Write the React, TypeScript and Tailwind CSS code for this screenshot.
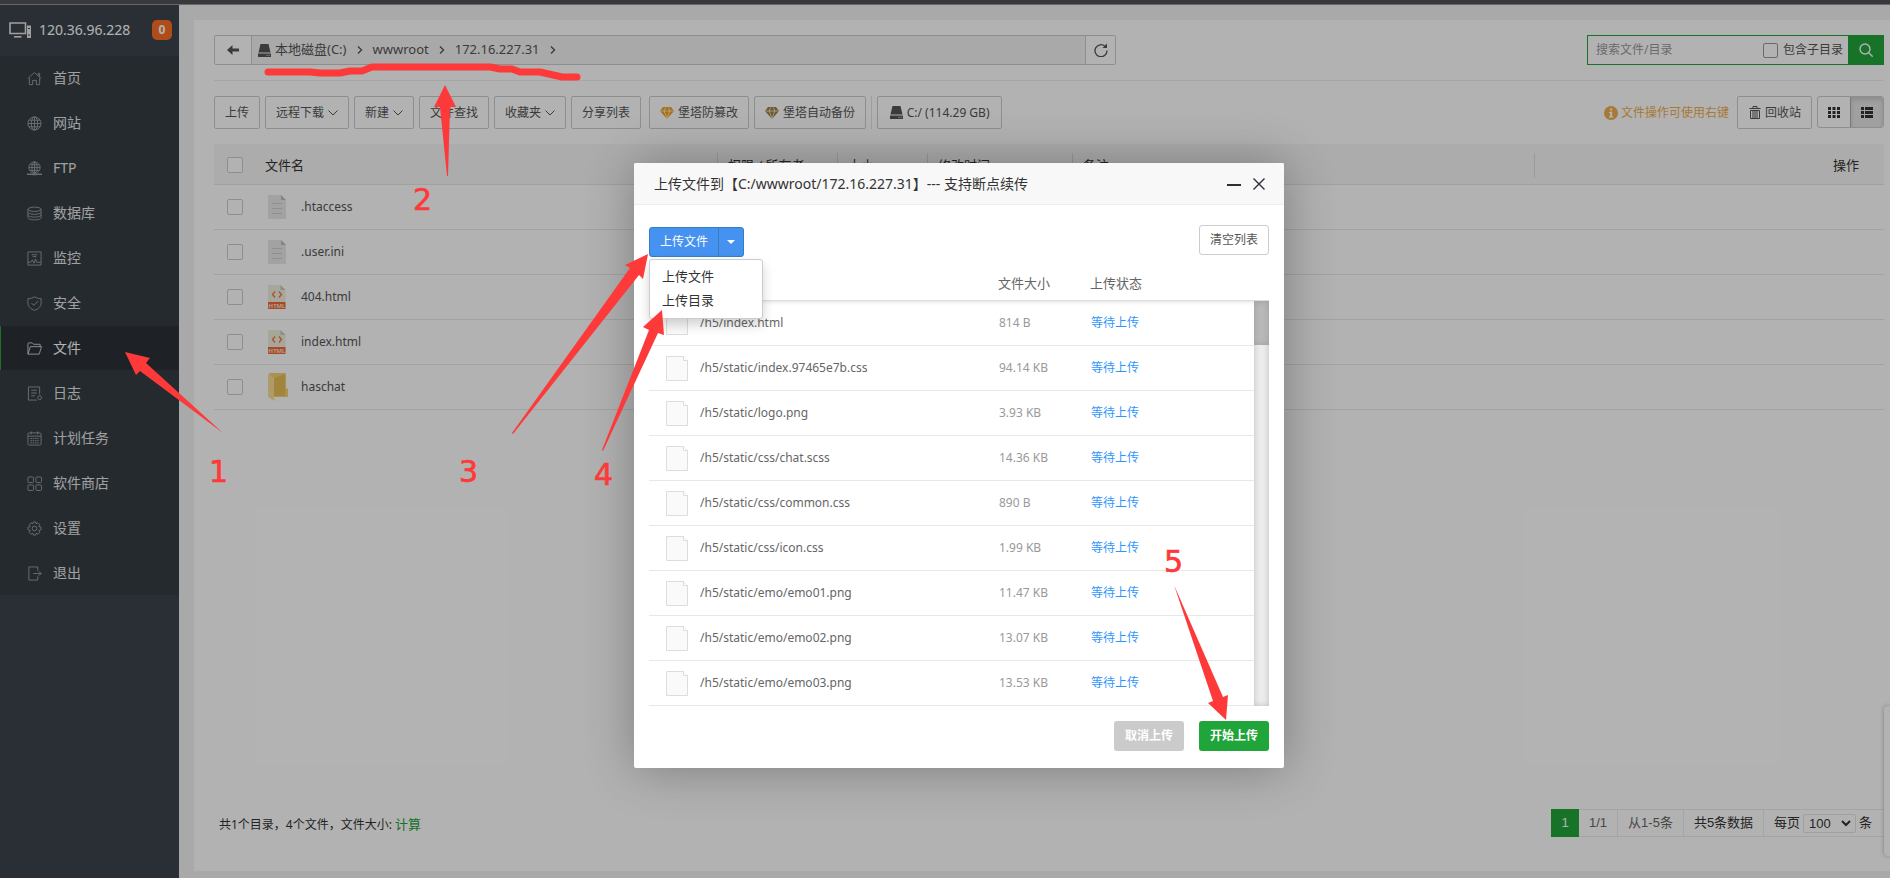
import type { ReactNode } from 'react';

type IconProps = { className?: string };

function LineIcon({ children }: { children: ReactNode }) {
  return (
    <svg viewBox="0 0 16 16" fill="none" stroke="currentColor" className="size-[15px]" aria-hidden="true">
      {children}
    </svg>
  );
}

const menu: { label: string; icon: ReactNode; active?: boolean }[] = [
  {
    label: '首页',
    icon: <path d="M.8 8.2 8 1.5l7.2 6.700M12 5V2.500h1.500v4M2.500 7.500v7H6V10h4v4.500h3.500v-7" />
  },
  {
    label: '网站',
    icon: (
      <>
        <circle cx="8" cy="8" r="7" />
        <ellipse cx="8" cy="8" rx="3.4" ry="7" />
        <path d="M8 1v14M1 8h14M2.2 4.5h11.6M2.2 11.5h11.6" />
      </>
    )
  },
  {
    label: 'FTP',
    icon: (
      <>
        <circle cx="8" cy="7" r="6" />
        <ellipse cx="8" cy="7" rx="2.8" ry="6" />
        <path d="M8 1v12M2 7h12M3 4h10M3 10h10" />
        <path d="M0 14.2h16M6 14.5h4" strokeWidth="1.6" />
      </>
    )
  },
  {
    label: '数据库',
    icon: (
      <>
        <ellipse cx="8" cy="3.5" rx="7" ry="2.3" />
        <path d="M1 3.5v9c0 1.3 3 2.3 7 2.300s7-1 7-2.300v-9M1 6.500c0 1.300 3 2.300 7 2.300s7-1 7-2.300M1 9.500c0 1.300 3 2.300 7 2.300s7-1 7-2.300" />
      </>
    )
  },
  {
    label: '监控',
    icon: <path d="M1 1h14v14H1zM5 4h6M6 6h4M1 12h3l1.600-2.500L7.600 13 9 8.500l1.500 3.500H15" />
  },
  {
    label: '安全',
    icon: <path d="M8 .8c2 1.400 4.400 1.800 7 2v4.700c0 3.600-2.700 6.300-7 7.800-4.300-1.500-7-4.200-7-7.800V2.800c2.600-.2 5-.6 7-2zM4.800 7.500 7.200 10l4.600-4.600" />
  },
  {
    label: '文件',
    active: true,
    icon: <path d="M1 14V3c0-.6.4-1 1-1h3.500L7 3.500h7V6M1 14 3.500 6h12L13 14z" />
  },
  {
    label: '日志',
    icon: (
      <>
        <path d="M13.500 9V1h-12v14h9M4.500 4.500h6M4.500 7.500h6M4.500 10.500h4" />
        <circle cx="13.500" cy="12.500" r="2" />
      </>
    )
  },
  {
    label: '计划任务',
    icon: (
      <>
        <rect x="1" y="2" width="14" height="13" rx="1.5" />
        <path d="M4.500.5v3M11.500.5v3M1 5.500h14" />
        <path d="M3.500 8h9M3.500 10.300h9M3.500 12.600h9" strokeDasharray="1.8 .7" />
      </>
    )
  },
  {
    label: '软件商店',
    icon: (
      <>
        <rect x="1" y="1" width="6" height="6" rx="1" />
        <rect x="9.500" y="1" width="6" height="6" rx="1" />
        <rect x="1" y="9.500" width="6" height="6" rx="1" />
        <rect x="9.500" y="9.500" width="6" height="6" rx="1" />
      </>
    )
  },
  {
    label: '设置',
    icon: (
      <>
        <circle cx="8" cy="8" r="2.500" />
        <path d="M6.700 1h2.600l.5 2 1.900-1.100 1.900 1.900L12.600 6l2.400.7v2.600l-2.400.7 1 2.200-1.900 1.900L9.800 13l-.5 2H6.700l-.5-2-1.900 1.100-1.900-1.900 1-2.200L1 9.300V6.700L3.400 6l-1-2.200 1.900-1.900L6.200 3z" />
      </>
    )
  },
  {
    label: '退出',
    icon: <path d="M11.500 5V1H2v14h9.500v-4M6.500 8H15M12.500 5.500 15 8l-2.500 2.500" />
  }
];

function DriveIcon({ className = '' }: IconProps) {
  return (
    <svg viewBox="0 0 13 13" fill="currentColor" className={`size-[13px] ${className}`} aria-hidden="true">
      <path d="M2.500 0h8l2 8.500H.5z" />
      <path fillRule="evenodd" d="M0 9.500h13V13H0zM8.500 10.800v1h1v-1zM10.700 10.800v1h1v-1z" />
    </svg>
  );
}

function Caret() {
  return (
    <svg viewBox="0 0 10 6" className="w-[10px] h-[6px] ml-1" fill="none" stroke="currentColor" aria-hidden="true">
      <path d="M.5.5 5 5 9.500.5" />
    </svg>
  );
}

function Gem({ className = '' }: IconProps) {
  return (
    <svg viewBox="0 0 14 12" className={`w-[14px] h-[12px] ${className}`} fill="currentColor" aria-hidden="true">
      <path d="M3 0h8l3 4-7 8-7-8z" />
      <path d="M.5 4h13M4.200 4 7 11.500 9.800 4 8.500.5M4.200 4 5.500.5" fill="none" stroke="#fff" strokeWidth=".7" />
    </svg>
  );
}

function Crumb({ children }: { children: ReactNode }) {
  return (
    <span className="flex items-center">
      <a href="#" className="flex items-center">{children}</a>
      <svg viewBox="0 0 6 8" className="w-[6px] h-[8px] mx-[10px]" fill="none" stroke="currentColor" strokeWidth="1.4" aria-hidden="true">
        <path d="m1 .5 3.500 3.500L1 7.500" />
      </svg>
    </span>
  );
}

function ToolButton({ children, className = '' }: { children: ReactNode; className?: string }) {
  return (
    <button className={`h-[33px] px-[10px] flex items-center justify-center rounded-[2px] border border-[#ccc] bg-white text-xs text-[#555] whitespace-nowrap ${className}`}>
      {children}
    </button>
  );
}

function Check({ label }: { label: string }) {
  return (
    <input type="checkbox" aria-label={label} className="appearance-none block size-4 rounded-[2px] border border-[#ccc] bg-white" />
  );
}

function TextFile() {
  return (
    <svg viewBox="0 0 18 24" className="w-[18px] h-6" aria-hidden="true">
      <path d="M0 0h13l5 5v19H0z" fill="#e8e8e8" />
      <path d="M13 0l5 5h-5z" fill="#bebebe" />
      <path d="M4 8.500h10M4 13.500h10M4 18.500h10" stroke="#cdcdcd" />
    </svg>
  );
}

function HtmlFile() {
  return (
    <svg viewBox="0 0 18 24" className="w-[18px] h-6" aria-hidden="true">
      <path d="M0 0h12.500l5 5v13H0z" fill="#eeeede" />
      <path d="M12.500 0l5 5h-5z" fill="#cacabc" />
      <path d="M7 6.500 4.500 9.500 7 12.500M11 6.500l2.500 3-2.500 3" fill="none" stroke="#f4743f" strokeWidth="1.3" />
      <rect y="17" width="17.500" height="7" fill="#f46a34" />
      <text x="9" y="23" textAnchor="middle" fontSize="6" fontWeight="600" fill="#fdeae0">HTML</text>
    </svg>
  );
}

function Folder() {
  return (
    <svg viewBox="0 0 20 28" className="w-5 h-7" aria-hidden="true">
      <path d="M1 0h17v15l2 1v8H6z" fill="#f6d274" />
      <path d="M6 5 17 1v22H6z" fill="#e9bf58" />
      <path d="M0 1l6 4v19l1 4-7-4z" fill="#f9df98" />
    </svg>
  );
}

const files = [
  { name: '.htaccess', icon: <TextFile /> },
  { name: '.user.ini', icon: <TextFile /> },
  { name: '404.html', icon: <HtmlFile /> },
  { name: 'index.html', icon: <HtmlFile /> },
  { name: 'haschat', icon: <Folder /> }
];

const uploads = [
  ['/h5/index.html', '814 B'],
  ['/h5/static/index.97465e7b.css', '94.14 KB'],
  ['/h5/static/logo.png', '3.93 KB'],
  ['/h5/static/css/chat.scss', '14.36 KB'],
  ['/h5/static/css/common.css', '890 B'],
  ['/h5/static/css/icon.css', '1.99 KB'],
  ['/h5/static/emo/emo01.png', '11.47 KB'],
  ['/h5/static/emo/emo02.png', '13.07 KB'],
  ['/h5/static/emo/emo03.png', '13.53 KB']
];

function Sidebar() {
  return (
    <aside className="w-[179px] shrink-0 bg-[#3c444d] text-[#e6e6e6] text-sm">
      <div className="h-[50px] pl-[9px] pr-[7px] flex items-center">
        <svg viewBox="0 0 23 16" className="w-[23px] h-4" fill="none" stroke="currentColor" aria-hidden="true">
          <path d="M1 1h15.500v10.500H1z" strokeWidth="1.6" />
          <path d="M5 14.800h7.500" strokeWidth="1.6" />
          <path d="M18 3.500h4V16h-4z" fill="currentColor" stroke="none" />
          <path d="M19 6.500h2M19 13h2" stroke="#3c444d" />
        </svg>
        <span className="ml-[7px] text-white">120.36.96.228</span>
        <span className="ml-auto size-5 rounded-[5px] bg-[#fc6d26] text-white text-xs leading-5 font-bold text-center">0</span>
      </div>
      <nav className="mt-px bg-[#353d44]">
        {menu.map((m) => (
          <a
            key={m.label}
            href="#"
            className={`mb-px h-11 flex items-center gap-[11px] border-l pl-[26px] ${
              m.active ? 'bg-[#2c3138] border-[#20a53a] text-white' : 'border-transparent'
            }`}
          >
            <span className={m.active ? 'text-[#d0d0d0]' : 'text-[#9a9fa3]'}><LineIcon>{m.icon}</LineIcon></span>
            {m.label}
          </a>
        ))}
      </nav>
    </aside>
  );
}

function PathBar() {
  return (
    <div className="flex items-center justify-between pb-[15px] border-b border-[#eee]">
      <div className="flex h-[30px] w-[902px] border border-[#ccc] rounded-[2px] text-[13px] text-[#555]">
        <button aria-label="返回" className="w-[37px] shrink-0 flex items-center justify-center border-r border-[#ccc]">
          <svg viewBox="0 0 12 10" className="w-3 h-[10px]" fill="currentColor" aria-hidden="true">
            <path d="M0 5 5.500 0v3.500H12v3H5.500V10z" />
          </svg>
        </button>
        <div className="flex-1 flex items-center pl-[6px] bg-[#f3f3f3]">
          <Crumb><DriveIcon className="mr-1" />本地磁盘(C:)</Crumb>
          <Crumb>wwwroot</Crumb>
          <Crumb>172.16.227.31</Crumb>
        </div>
        <button aria-label="刷新" className="w-[30px] shrink-0 flex items-center justify-center border-l border-[#ccc]">
          <svg viewBox="0 0 14 14" className="size-[14px]" fill="none" stroke="currentColor" strokeWidth="1.3" aria-hidden="true">
            <path d="M11 3.200A6 6 0 1 0 13 7.500" />
            <path d="M13 .5V5H8.500z" fill="currentColor" stroke="none" />
          </svg>
        </button>
      </div>
      <form className="flex h-[30px] text-xs">
        <div className="flex items-center w-[261px] border border-r-0 border-[#20a53a]">
          <input type="text" aria-label="搜索" placeholder="搜索文件/目录" className="flex-1 min-w-0 pl-2 outline-none placeholder:text-[#999]" />
          <label className="flex items-center gap-[5px] pr-[5px] text-[#555]">
            <input type="checkbox" className="appearance-none size-[15px] rounded-[2px] border border-[#999]" />
            包含子目录
          </label>
        </div>
        <button aria-label="搜索文件" type="button" className="w-9 flex items-center justify-center bg-[#20a53a] text-white">
          <svg viewBox="0 0 14 14" className="size-[14px]" fill="none" stroke="currentColor" strokeWidth="1.4" aria-hidden="true">
            <circle cx="6" cy="6" r="5" />
            <path d="m9.700 9.700 4 4" />
          </svg>
        </button>
      </form>
    </div>
  );
}

function Toolbar() {
  return (
    <div className="mt-[15px] flex items-start justify-between">
      <div className="flex gap-[5px]">
        <ToolButton>上传</ToolButton>
        <ToolButton>远程下载<Caret /></ToolButton>
        <ToolButton>新建<Caret /></ToolButton>
        <ToolButton>文件查找</ToolButton>
        <ToolButton>收藏夹<Caret /></ToolButton>
        <ToolButton>分享列表</ToolButton>
        <ToolButton className="ml-[3px]"><Gem className="mr-1 text-[#f0a020]" />堡塔防篡改</ToolButton>
        <ToolButton><Gem className="mr-1 text-[#a08040]" />堡塔自动备份</ToolButton>
        <div className="w-px bg-[#e2e2e2]" />
        <ToolButton className="w-[125px]"><DriveIcon className="mr-1" />C:/ (114.29 GB)</ToolButton>
      </div>
      <div className="flex gap-[5px]">
        <span className="flex items-center gap-[3px] mr-[3px] text-xs text-[#f0ad4e]">
          <svg viewBox="0 0 14 14" className="size-[14px]" aria-hidden="true">
            <circle cx="7" cy="7" r="7" fill="currentColor" />
            <path d="M6 2.500h2.200v2H6zM5 5.800h3.200v4.400h1.100v1.300H5v-1.300h1.100V7.100H5z" fill="#fff" />
          </svg>
          文件操作可使用右键
        </span>
        <ToolButton>
          <svg viewBox="0 0 12 13" className="w-3 h-[13px] mr-1 ml-px" fill="none" stroke="currentColor" aria-hidden="true">
            <path d="M.5 2.500h11M4 2.500v-2h4v2M1.500 4.500h9v8h-9zM4 5v7M6 5v7M8 5v7" />
          </svg>
          回收站
        </ToolButton>
        <div className="flex h-8 w-[67px] rounded-[3px] border border-[#ccc] overflow-hidden text-[#333]">
          <button aria-label="图标视图" className="flex-1 flex items-center justify-center">
            <svg viewBox="0 0 12 11" className="w-3 h-[11px]" fill="currentColor" aria-hidden="true">
              <path d="M0 0h3v3H0zM4.500 0h3v3h-3zM9 0h3v3H9zM0 4h3v3H0zM4.500 4h3v3h-3zM9 4h3v3H9zM0 8h3v3H0zM4.500 8h3v3h-3zM9 8h3v3H9z" />
            </svg>
          </button>
          <button aria-label="列表视图" className="flex-1 flex items-center justify-center border-l border-[#adadad] bg-[#e6e6e6] shadow-[inset_0_3px_5px_rgba(0,0,0,.125)]">
            <svg viewBox="0 0 12 11" className="w-3 h-[11px]" fill="currentColor" aria-hidden="true">
              <path d="M0 0h3v3H0zM4 0h8v3H4zM0 4h3v3H0zM4 4h8v3H4zM0 8h3v3H0zM4 8h8v3H4z" />
            </svg>
          </button>
        </div>
      </div>
    </div>
  );
}

function FileTable() {
  return (
    <table className="mt-[15px] w-full table-fixed text-[13px] text-[#333]">
      <colgroup>
        <col className="w-[40px]" />
        <col className="w-[463px]" />
        <col className="w-[120px]" />
        <col className="w-[90px]" />
        <col className="w-[145px]" />
        <col className="w-[462px]" />
        <col />
      </colgroup>
      <thead>
        <tr className="h-10 bg-[#f6f6f6] border-b border-[#e6e6e6] text-left">
          <th className="pl-[13px] pt-[2px]"><Check label="全选" /></th>
          <th className="pl-[11px] pt-[3px] font-normal">文件名</th>
          {['权限 / 所有者', '大小', '修改时间', '备注'].map((h) => (
            <th key={h} className="pt-[3px] font-normal">
              <div className="h-[25px] leading-[25px] pl-[10px] border-l border-[#ddd]">{h}</div>
            </th>
          ))}
          <th className="pt-[3px] font-normal">
            <div className="h-[25px] leading-[25px] pr-[25px] border-l border-[#ddd] text-right">操作</div>
          </th>
        </tr>
      </thead>
      <tbody>
        {files.map((f) => (
          <tr key={f.name} className="h-[45px] border-b border-[#e9e9e9]">
            <td className="pl-[13px]"><Check label={f.name} /></td>
            <td colSpan={6}>
              <div className="flex items-center pl-[14px] text-xs text-[#555]">
                <span className="w-[33px]">{f.icon}</span>
                <a href="#">{f.name}</a>
              </div>
            </td>
          </tr>
        ))}
      </tbody>
    </table>
  );
}

function Footer() {
  return (
    <div className="mt-auto flex items-center justify-between pl-[5px] text-[13px] text-[#333]">
      <div className="pt-[3px] text-xs">
        共1个目录，4个文件，文件大小: <a href="#" className="text-[13px] text-[#20a53a]">计算</a>
      </div>
      <div className="flex h-7 leading-[26px] font-['Liberation_Sans','Noto_Sans_CJK_SC',sans-serif]">
        <span className="w-7 leading-7 text-center bg-[#20a53a] text-white">1</span>
        <span className="w-[39px] text-center border-y border-r border-[#ececec] text-[#666]">1/1</span>
        <span className="w-[66px] text-center border-y border-r border-[#ececec] text-[#666]">从1-5条</span>
        <span className="w-20 text-center border-y border-r border-[#ececec]">共5条数据</span>
        <label className="w-[120px] pl-[10px] flex items-center gap-[3px] border-y border-[#ececec] whitespace-nowrap">
          每页
          <span className="relative flex items-center">
            <select className="appearance-none w-[53px] h-[19px] pl-[5px] leading-[17px] rounded-[2px] border border-[#e6e6e6] bg-white">
              <option>100</option>
            </select>
            <svg viewBox="0 0 10 7" className="absolute right-[5px] w-[10px] h-[7px] pointer-events-none" fill="none" stroke="currentColor" strokeWidth="2" aria-hidden="true">
              <path d="m1 1 4 4 4-4" />
            </svg>
          </span>
          条
        </label>
      </div>
    </div>
  );
}

function BlankFile() {
  return (
    <svg viewBox="0 0 22 25" className="w-[22px] h-[25px]" fill="#fafafa" stroke="#ddd" aria-hidden="true">
      <path d="M.5.5h17l4 4v20H.5z" />
      <path d="M17.500.5v4h4" fill="#fff" />
    </svg>
  );
}

function UploadDialog() {
  return (
    <section role="dialog" aria-label="上传文件" className="relative w-[650px] rounded-[2px] bg-white shadow-[1px_1px_50px_rgba(0,0,0,.3)]">
      <header className="h-[42px] pl-5 pr-[19px] flex items-center rounded-t-[2px] border-b border-[#eee] bg-[#f8f8f8] text-sm text-[#333]">
        <h2>上传文件到【C:/wwwroot/172.16.227.31】--- 支持断点续传</h2>
        <button aria-label="最小化" className="ml-auto mr-3">
          <svg viewBox="0 0 14 12" className="w-[14px] h-3" stroke="#2e2d3c" strokeWidth="2" aria-hidden="true"><path d="M0 7h14" /></svg>
        </button>
        <button aria-label="关闭">
          <svg viewBox="0 0 12 12" className="size-3" stroke="#2e2d3c" strokeWidth="1.4" aria-hidden="true"><path d="m.5.5 11 11M11.500.5l-11 11" /></svg>
        </button>
      </header>

      <div className="px-[15px] pt-5 pb-[17px]">
        <div className="h-8 flex items-start justify-between text-xs">
          <div className="relative self-end flex h-[30px] rounded-[3px] border border-[#357ebd] bg-[#4592f0] text-white">
            <button className="w-[68px]">上传文件</button>
            <button aria-label="更多" className="w-[25px] flex items-center justify-center border-l border-[#357ebd]">
              <svg viewBox="0 0 8 4" className="w-2 h-1" fill="currentColor" aria-hidden="true"><path d="M0 0h8L4 4z" /></svg>
            </button>
            <ul className="absolute -left-px top-[31px] z-10 w-[114px] h-[60px] pt-1 pl-3 rounded-[3px] border border-[#ccc] bg-white text-[13px] leading-6 text-[#333] shadow-[0_6px_12px_rgba(0,0,0,.175)]">
              <li><a href="#">上传文件</a></li>
              <li><a href="#">上传目录</a></li>
            </ul>
          </div>
          <button className="w-[70px] h-[30px] rounded-[3px] border border-[#ccc] text-[#555]">清空列表</button>
        </div>

        <table className="w-full table-fixed text-[13px] text-[#666]">
          <thead>
            <tr className="h-[43px] border-b border-[#ddd] text-left">
              <th aria-label="文件名" className="w-[349px]" />
              <th className="w-[92px] pt-[10px] font-normal">文件大小</th>
              <th className="pt-[10px] font-normal">上传状态</th>
            </tr>
          </thead>
        </table>
        <div className="flex">
          <table className="flex-1 table-fixed text-xs shadow-[inset_0_4px_4px_-3px_rgba(0,0,0,.12)]">
            <tbody>
              {uploads.map(([name, size]) => (
                <tr key={name} className="h-[45px] border-b border-[#e8e8e8]">
                  <td className="w-[350px]">
                    <div className="flex items-center pl-[17px] gap-3 text-[#666]">
                      <BlankFile />
                      {name}
                    </div>
                  </td>
                  <td className="w-[92px] text-[#999]">{size}</td>
                  <td className="text-[#2f96fc]">等待上传</td>
                </tr>
              ))}
            </tbody>
          </table>
          <div className="w-[15px] bg-[#ececec] shadow-[inset_0_0_6px_rgba(0,0,0,.2)]">
            <div className="h-11 bg-[#b8b8b8] shadow-[inset_0_0_6px_rgba(0,0,0,.15)]" />
          </div>
        </div>

        <div className="mt-[15px] flex justify-end gap-[15px] text-xs font-bold text-white">
          <button className="w-[70px] h-[30px] rounded-[3px] bg-[#cbcbcb]">取消上传</button>
          <button className="w-[70px] h-[30px] rounded-[3px] bg-[#20a53a]">开始上传</button>
        </div>
      </div>

      {/* steps 3-5 belong to the dialog and move with it */}
      <svg viewBox="634 163 650 605" className="absolute inset-0 z-20 size-full overflow-visible pointer-events-none fill-[#fd3a39]" aria-hidden="true">
        <path d="M648 254 625 265 630 268 512 433 513 434 639 275 643 279z" />
        <path d="M662 310 643 327 649 330 602 450 603 451 658 333 664 335z" />
        <path d="M1226 720 1208 703 1213 701 1174 585 1223 697 1228 695z" />
        <g className="font-['DejaVu_Sans'] text-[30px] stroke-[#fd3a39]" strokeWidth=".7">
          <text x="459" y="482">3</text>
          <text x="594" y="485">4</text>
          <text x="1164" y="572">5</text>
        </g>
      </svg>
    </section>
  );
}

export default function App() {
  return (
    <div className="relative min-h-screen flex flex-col overflow-hidden bg-[#f2f2f2] font-['Noto_Sans','Noto_Sans_CJK_SC',sans-serif]">
      <div className="relative z-30 h-[5px] shrink-0 bg-[#38393d] border-b border-[#66676a]" />
      <div className="flex-1 flex">
        <Sidebar />
        <main className="flex-1 min-w-0 flex flex-col mt-[15px] ml-[15px] mb-[7px] pt-[15px] pl-5 pr-[6px] pb-[34px] bg-white">
          <PathBar />
          <Toolbar />
          <FileTable />
          <Footer />
        </main>
      </div>
      <div className="absolute right-0 bottom-[22px] w-[6px] h-[150px] rounded-l-[4px] bg-white shadow-[0_0_4px_rgba(0,0,0,.3)]" />

      <div className="absolute inset-0 z-10 bg-black/30" />

      <svg className="absolute left-0 top-0 z-20 w-[640px] h-[500px] pointer-events-none fill-[#fd3a39]" aria-hidden="true">
        <path
          d="M268 72h42l10 1h20l10-2h12l10-4h118l10 2h12l8 3h20l22 5h15"
          fill="none"
          stroke="#fd3a39"
          strokeWidth="7"
          strokeLinecap="round"
          strokeLinejoin="round"
          className="fill-none"
        />
        <path d="M125 352 150 358 146 363 223 433 140 371 136 375z" />
        <path d="M445 85 434 107 440 107 447 176 448 176 450 107 456 107z" />
        <g className="font-['DejaVu_Sans'] text-[30px] stroke-[#fd3a39]" strokeWidth=".7">
          <text x="209" y="482">1</text>
          <text x="413" y="210">2</text>
        </g>
      </svg>

      <div className="absolute inset-0 z-20 flex items-start justify-center pt-[163px] pl-7">
        <UploadDialog />
      </div>
    </div>
  );
}
